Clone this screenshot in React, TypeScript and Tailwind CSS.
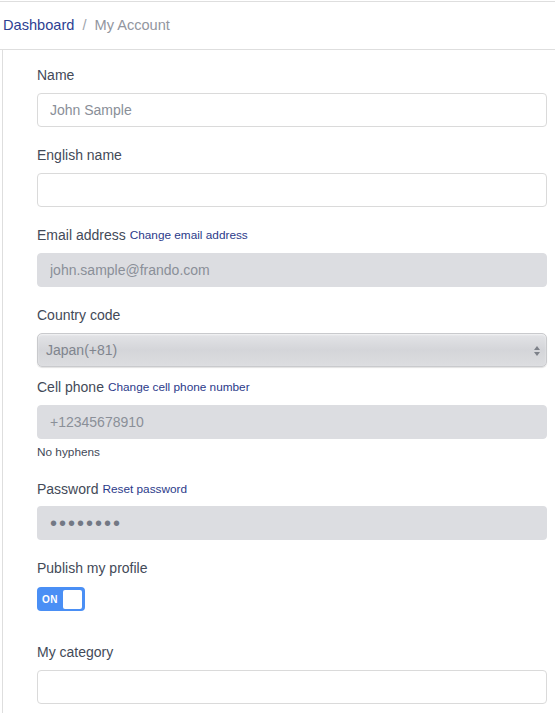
import React from 'react';

const font = { fontFamily: '"Liberation Sans", Arial, sans-serif' };

function Label({ text, link }: { text: string; link?: string }) {
  return (
    <div className="h-5 flex items-center text-[14px] text-[#434a58] leading-5">
      <span>{text}</span>
      {link && <a className="ml-1 text-[11.8px] text-[#2b3a8a]">{link}</a>}
    </div>
  );
}

function TextInput({ placeholder, value, disabled }: { placeholder?: string; value?: string; disabled?: boolean }) {
  return (
    <input
      className={
        'mt-2 block w-full h-[34px] rounded-[4px] border px-3 text-[14px] outline-none ' +
        (disabled
          ? 'bg-[#dcdde1] border-[#dcdde1] text-[#8a8f98]'
          : 'bg-white border-[#dadada] placeholder:text-[#8a8f98]')
      }
      placeholder={placeholder}
      defaultValue={value}
      readOnly={disabled}
    />
  );
}

export default function App() {
  return (
    <div className="min-h-screen bg-white" style={font}>
      <div className="w-[555px] mt-px border-t border-[#dedede]">
        {/* Breadcrumb */}
        <div className="h-[48px] flex items-center pl-[3px] text-[14.6px] border-b border-[#dedede]">
          <a className="text-[#2d3f92]">Dashboard</a>
          <span className="mx-[8px] text-[#a0a4ab]">/</span>
          <span className="text-[#9296a0]">My Account</span>
        </div>

        {/* Form panel */}
        <div className="ml-[2px] border-l border-[#dedede] pl-[34px] pr-[8px] pt-[15px] pb-4">
          <Label text="Name" />
          <TextInput placeholder="John Sample" />

          <div className="mt-[18px]">
            <Label text="English name" />
            <TextInput />
          </div>

          <div className="mt-[18px]">
            <Label text="Email address" link="Change email address" />
            <TextInput value="john.sample@frando.com" disabled />
          </div>

          <div className="mt-[18px]">
            <Label text="Country code" />
            <div className="relative mt-2 h-[34px] rounded-[5px] border border-[#c9cacd] bg-gradient-to-b from-[#e3e4e7] via-[#d4d5d9] to-[#dcdde0] shadow-[inset_0_1px_2px_rgba(255,255,255,0.6),0_1px_1px_rgba(0,0,0,0.12)]">
              <div className="h-full flex items-center pl-[8px] text-[14px] text-[#80858e]">Japan(+81)</div>
              <svg className="absolute right-[5px] top-[11px]" width="8" height="12" viewBox="0 0 8 12">
                <path d="M4 1 L7 5 L1 5 Z" fill="#7d8189" />
                <path d="M4 11 L7 7 L1 7 Z" fill="#7d8189" />
              </svg>
            </div>
          </div>

          <div className="mt-[10px]">
            <Label text="Cell phone" link="Change cell phone number" />
            <TextInput value="+12345678910" disabled />
            <div className="mt-[6px] text-[11.8px] text-[#434a58] leading-[14px]">No hyphens</div>
          </div>

          <div className="mt-[20px]">
            <Label text="Password" link="Reset password" />
            <div className="mt-[7px] h-[34px] rounded-[4px] bg-[#dcdde1] flex items-center pl-[13px] text-[20px] tracking-[2px] text-[#737884]">
              ••••••••
            </div>
          </div>

          <div className="mt-[18px]">
            <Label text="Publish my profile" />
            <div className="mt-[9px] w-[48px] h-[24px] rounded-[4px] bg-[#4a8ff5] flex items-center justify-between pl-[5px] pr-[3px]">
              <span className="text-[10px] font-bold text-white tracking-[0.5px]">ON</span>
              <span className="w-[19px] h-[19px] rounded-[2px] bg-white" />
            </div>
          </div>

          <div className="mt-[31px]">
            <Label text="My category" />
            <TextInput />
          </div>
        </div>
      </div>
    </div>
  );
}
